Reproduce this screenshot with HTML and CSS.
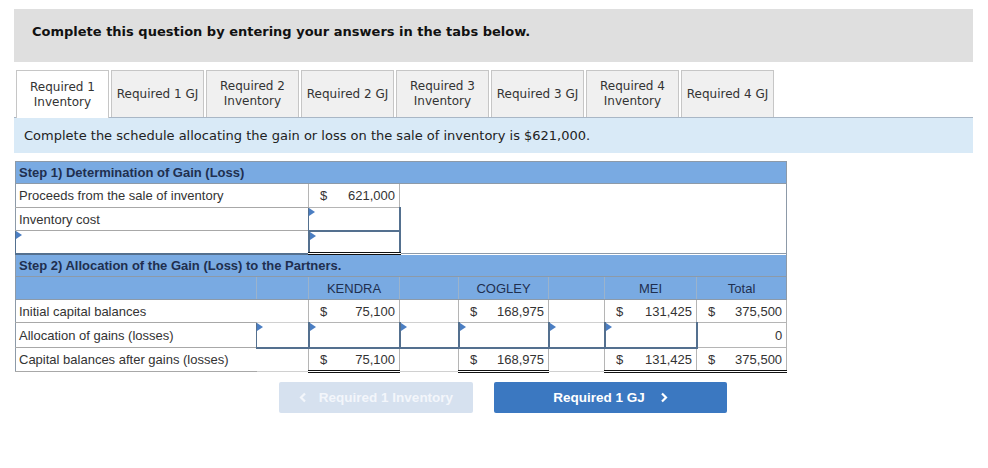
FILE: index.html
```html
<!DOCTYPE html>
<html>
<head>
<meta charset="utf-8">
<link rel="stylesheet" href="styles.css">
</head>
<body>
<div class="page">
  <div class="header">Complete this question by entering your answers in the tabs below.</div>
  <div class="tabs">
    <div class="tab active">Required 1<br>Inventory</div>
    <div class="tab">Required 1 GJ</div>
    <div class="tab">Required 2<br>Inventory</div>
    <div class="tab">Required 2 GJ</div>
    <div class="tab">Required 3<br>Inventory</div>
    <div class="tab">Required 3 GJ</div>
    <div class="tab">Required 4<br>Inventory</div>
    <div class="tab">Required 4 GJ</div>
  </div>
  <div class="strip">Complete the schedule allocating the gain or loss on the sale of inventory is $621,000.</div>

  <table class="sched">
    <colgroup>
      <col class="c-label"><col class="c-in1"><col class="c-ken"><col class="c-in2"><col class="c-cog"><col class="c-in3"><col class="c-mei"><col class="c-tot">
    </colgroup>
    <tr class="hd"><td colspan="8">Step 1) Determination of Gain (Loss)</td></tr>
    <tr class="r1">
      <td colspan="2" class="lbl">Proceeds from the sale of inventory</td>
      <td class="val"><span class="cur">$</span><span class="num">621,000</span></td>
      <td colspan="5" class="blank"></td>
    </tr>
    <tr class="r2">
      <td colspan="2" class="lbl">Inventory cost</td>
      <td class="inp"><span class="tri"></span></td>
      <td colspan="5" class="blank"></td>
    </tr>
    <tr class="r3">
      <td colspan="2" class="inp"><span class="tri"></span></td>
      <td class="inp dbl"><span class="tri"></span></td>
      <td colspan="5" class="blank"></td>
    </tr>
    <tr class="hd"><td colspan="8">Step 2) Allocation of the Gain (Loss) to the Partners.</td></tr>
    <tr class="colhd">
      <td></td><td></td><td>KENDRA</td><td></td><td>COGLEY</td><td></td><td>MEI</td><td>Total</td>
    </tr>
    <tr class="r4">
      <td class="lbl">Initial capital balances</td>
      <td class="empty"></td>
      <td class="val"><span class="cur">$</span><span class="num">75,100</span></td>
      <td class="empty"></td>
      <td class="val"><span class="cur">$</span><span class="num">168,975</span></td>
      <td class="empty"></td>
      <td class="val"><span class="cur">$</span><span class="num">131,425</span></td>
      <td class="val"><span class="cur">$</span><span class="num">375,500</span></td>
    </tr>
    <tr class="r5">
      <td class="lbl">Allocation of gains (losses)</td>
      <td class="inp"><span class="tri"></span></td>
      <td class="inp"><span class="tri"></span></td>
      <td class="inp"><span class="tri"></span></td>
      <td class="inp"><span class="tri"></span></td>
      <td class="inp"><span class="tri"></span></td>
      <td class="inp"><span class="tri"></span></td>
      <td class="val"><span class="num">0</span></td>
    </tr>
    <tr class="r6">
      <td class="lbl">Capital balances after gains (losses)</td>
      <td class="empty"></td>
      <td class="val dbl"><span class="cur">$</span><span class="num">75,100</span></td>
      <td class="empty"></td>
      <td class="val dbl"><span class="cur">$</span><span class="num">168,975</span></td>
      <td class="empty"></td>
      <td class="val dbl"><span class="cur">$</span><span class="num">131,425</span></td>
      <td class="val dbl"><span class="cur">$</span><span class="num">375,500</span></td>
    </tr>
  </table>

  <div class="nav">
    <div class="btn prev"><svg class="chev-l" width="8" height="11" viewBox="0 0 8 11"><polyline points="6,1.5 2,5.5 6,9.5" fill="none" stroke="currentColor" stroke-width="2.2"/></svg>Required 1 Inventory</div>
    <div class="btn next">Required 1 GJ<svg class="chev-r" width="8" height="11" viewBox="0 0 8 11"><polyline points="2,1.5 6,5.5 2,9.5" fill="none" stroke="currentColor" stroke-width="2.2"/></svg></div>
  </div>
</div>
</body>
</html>
```

FILE: styles.css
```css
html, body {
  margin: 0;
  padding: 0;
  background: #ffffff;
}
body {
  font-family: "DejaVu Sans", Verdana, sans-serif;
  color: #222;
}
.page {
  padding: 9px 15px 0 14px;
  width: 959px;
}
.header {
  background: #dfdfdf;
  height: 53px;
  box-sizing: border-box;
  padding: 14px 0 0 18px;
  font-size: 13px;
  line-height: 17px;
  font-weight: bold;
  color: #111;
}
.tabs {
  display: flex;
  gap: 2px;
  margin-top: 8px;
  padding-left: 2px;
  height: 47px;
}
.tab {
  width: 93px;
  height: 47px;
  box-sizing: border-box;
  border: 1px solid #c6c6c6;
  border-bottom: none;
  background: #f0f0f0;
  font-size: 12px;
  line-height: 15px;
  color: #333;
  display: flex;
  align-items: center;
  justify-content: center;
  text-align: center;
}
.tab.active {
  background: #ffffff;
  height: 48px;
  position: relative;
  z-index: 1;
}
.strip {
  background: #d9eaf7;
  border-top: 1px solid #a9b7c6;
  height: 36px;
  box-sizing: border-box;
  padding-left: 10px;
  font-size: 13px;
  line-height: 36px;
  color: #222;
}
.sched {
  margin-top: 8px;
  margin-left: 1px;
  border-collapse: collapse;
  table-layout: fixed;
  width: 772px;
  font-family: "Liberation Sans", Arial, sans-serif;
  font-size: 13px;
  color: #333;
  border: 1px solid #8d9aa8;
}
.c-label { width: 241px; }
.c-in1 { width: 52px; }
.c-ken { width: 91px; }
.c-in2 { width: 59px; }
.c-cog { width: 90px; }
.c-in3 { width: 56px; }
.c-mei { width: 92px; }
.c-tot { width: 90px; }
.sched td {
  padding: 0;
  height: 23px;
  box-sizing: border-box;
  position: relative;
}
.sched tr.r1 td { height: 24px; }
.sched tr.r4 td { height: 23px; }
.sched tr.r5 td { height: 25px; }
.sched tr.r6 td { height: 24px; }
.sched tr.hd td {
  background: #79aae2;
  font-weight: bold;
  color: #1f2f4f;
  padding-left: 3px;
  height: 23px;
  border-top: 1px solid #8d9aa8;
  border-bottom: 1px solid #8d9aa8;
}
.sched tr.hd:first-child td {
  height: 22px;
}
.sched tr.colhd td {
  background: #79aae2;
  text-align: center;
  color: #1f2f4f;
  font-size: 13px;
  border-left: 1px solid #9bb3cc;
  border-bottom: 1px solid #8d9aa8;
  height: 23px;
}
.sched tr.colhd td:first-child {
  border-left: none;
}
.lbl {
  padding-left: 3px !important;
  border-bottom: 1px solid #a8a8a8;
  white-space: nowrap;
}
.val {
  border: 1px solid #b5b5b5;
  text-align: right;
  padding-right: 4px !important;
  white-space: nowrap;
}
.val .cur {
  position: absolute;
  left: 11px;
}
.blank {
  border: none;
}
.empty {
  border-bottom: 1px solid #d0d0d0;
}
.inp {
  border: 2px solid #54708f;
  border-top-width: 1px;
  border-left-width: 1px;
  background: #fff;
}
.tri {
  position: absolute;
  left: 0;
  top: 0;
  width: 0;
  height: 0;
  border-top: 4px solid transparent;
  border-bottom: 4px solid transparent;
  border-left: 6px solid #4b7ec2;
}
.dbl {
  border-bottom: 3px double #111 !important;
}
.nav {
  display: flex;
  gap: 21px;
  margin-top: 9px;
  padding-left: 265px;
}
.btn {
  height: 31px;
  display: flex;
  align-items: center;
  justify-content: center;
  font-family: "Liberation Sans", Arial, sans-serif;
  font-weight: bold;
  font-size: 13.5px;
  border-radius: 2px;
}
.prev {
  width: 194px;
  background: #d6e1ef;
  color: #f3f6fb;
}
.next {
  width: 233px;
  background: #3b78c1;
  color: #ffffff;
}
.chev-l {
  margin-right: 12px;
}
.chev-r {
  margin-left: 15px;
}
```
